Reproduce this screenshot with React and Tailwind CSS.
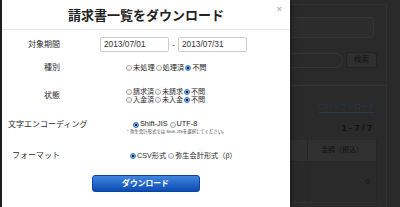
import React from "react";

const FONT = { fontFamily: '"Liberation Sans", "Noto Sans CJK JP", sans-serif' };

function Radio({ checked }) {
  return checked ? (
    <span className="block w-[6px] h-[6px] rounded-full shrink-0 border border-[#3a73c2] bg-[radial-gradient(circle,#15233a_0,#15233a_1px,#86bbf2_1.6px,#4a8ad8_100%)]" />
  ) : (
    <span className="block w-[6px] h-[6px] rounded-full shrink-0 border border-[#a8a8a8] bg-gradient-to-b from-white to-[#e4e4e4]" />
  );
}

function Opt({ checked, children }) {
  return (
    <span className="flex items-center gap-[1px]">
      <Radio checked={checked} />
      <span className="whitespace-nowrap">{children}</span>
    </span>
  );
}

function Label({ children }) {
  return (
    <div className="w-[52px] ml-[6px] shrink-0 text-right whitespace-nowrap text-[8px] text-[#2a2a2a]">
      {children}
    </div>
  );
}

export default function App() {
  return (
    <div className="w-[400px] h-[207px] overflow-hidden flex bg-[#2a2a2a]" style={FONT}>
      <div className="w-[2px] shrink-0 bg-[#262626]" />

      {/* Modal */}
      <div className="w-[288px] shrink-0 h-full bg-white relative z-10 shadow-[0_0_6px_rgba(0,0,0,0.6)] flex flex-col">
        <div className="h-[30px] border-b border-[#e8e8e8] flex items-center justify-center pt-[3px] relative">
          <span className="text-[13px] font-bold text-[#222]">請求書一覧をダウンロード</span>
          <span className="absolute right-[8px] top-[5px] text-[9px] font-bold text-[#bbb] leading-[9px]">×</span>
        </div>

        {/* 対象期間 */}
        <div className="mt-[7px] h-[15px] flex items-center">
          <Label>対象期間</Label>
          <div className="ml-[40px] flex items-center">
            <div className="w-[69px] h-[15px] border border-[#ccc] rounded-[2px] pl-[3px] flex items-center text-[8.3px] text-[#333]">2013/07/01</div>
            <div className="w-[9px] text-center text-[8px] text-[#333]">-</div>
            <div className="w-[69px] h-[15px] border border-[#ccc] rounded-[2px] pl-[3px] flex items-center text-[8.3px] text-[#333]">2013/07/31</div>
          </div>
        </div>

        {/* 種別 */}
        <div className="mt-[11px] h-[10px] flex items-center">
          <Label>種別</Label>
          <div className="ml-[66px] flex items-center gap-[1px] text-[7.2px] text-[#1e1e1e]">
            <Opt>未処理</Opt>
            <Opt>処理済</Opt>
            <Opt checked>不問</Opt>
          </div>
        </div>

        {/* 状態 */}
        <div className="mt-[15px] h-[16px] flex items-center">
          <Label>状態</Label>
          <div className="ml-[66px] flex flex-col text-[7px] leading-[8px] text-[#1e1e1e]">
            <div className="h-[8px] flex items-center gap-[1px]">
              <Opt>請求済</Opt>
              <Opt>未請求</Opt>
              <Opt checked>不問</Opt>
            </div>
            <div className="h-[8px] flex items-center gap-[1px]">
              <Opt>入金済</Opt>
              <Opt>未入金</Opt>
              <Opt checked>不問</Opt>
            </div>
          </div>
        </div>

        {/* 文字エンコーディング */}
        <div className="mt-[16px] flex items-start">
          <div className="h-[9px] flex items-center">
            <Label>文字エンコーディング</Label>
          </div>
          <div className="ml-[67px] flex flex-col">
            <div className="h-[9px] pl-[6px] flex items-center gap-[2px] text-[7.3px] text-[#1e1e1e]">
              <Opt checked>Shift-JIS</Opt>
              <Opt>UTF-8</Opt>
            </div>
            <div className="h-[5px] leading-[5px] text-[4.4px] text-[#444] whitespace-nowrap">* 弥生会計形式では Shift-JISを選択してください。</div>
          </div>
        </div>

        {/* フォーマット */}
        <div className="mt-[17px] h-[10px] flex items-center">
          <Label>フォーマット</Label>
          <div className="ml-[70px] flex items-center gap-[2px] text-[7.2px] text-[#1e1e1e]">
            <Opt checked>CSV形式</Opt>
            <Opt>弥生会計形式（β）</Opt>
          </div>
        </div>

        <div className="mt-[14px] flex justify-center pr-[1px]">
          <div className="w-[108px] h-[17px] rounded-[3px] border border-[#0b43a0] bg-gradient-to-b from-[#3f86e0] to-[#0a4cb2] flex items-center justify-center text-white text-[7.8px] font-bold">
            ダウンロード
          </div>
        </div>
      </div>

      {/* Background page (behind overlay) */}
      <div className="flex-1 flex">
        <div className="w-[97px] shrink-0 mt-[4px] h-[203px] border-t border-r border-[#323232] flex flex-col">
          <div className="mt-[12px] h-[21px] w-[84px] border border-y-[#353535] border-r-[#353535] border-l-0 rounded-r-[3px] bg-[#2c2c2c]" />
          <div className="mt-[14px] h-[16px] flex items-center">
            <div className="w-[53px] h-[15px] border-y border-r border-[#353535] rounded-r-[8px]" />
            <div className="ml-[3px] w-[31px] h-[16px] border border-[#222] rounded-[3px] bg-[#2f2f2f] flex items-center justify-center text-[7.5px] text-[#141414]">検索</div>
          </div>
          <div className="mt-[17px] border-t border-[#353535]" />
          <div className="mt-[16px] flex justify-end pr-[11px]">
            <span className="leading-[9px] pb-[1px] border-b border-[#2a3a4c] text-[7px] text-[#223850] whitespace-nowrap">CSVダウンロード</span>
          </div>
          <div className="mt-[11px] h-[10px] flex items-center justify-end pr-[14px] text-[9px] font-bold text-[#0f0f0f] whitespace-nowrap">1 - 7 / 7</div>
          <div className="mt-[6px] flex w-[87px]">
            <div className="w-[17px] flex flex-col">
              <div className="h-[22px] bg-[#303030] border-b border-[#262626]" />
              <div className="h-[41px] border-b border-[#333]" />
            </div>
            <div className="w-[70px] flex flex-col border-l border-r border-[#262626]">
              <div className="h-[22px] bg-[#303030] border-b border-[#262626] flex items-center justify-center text-[7px] text-[#131313]">金額（税込）</div>
              <div className="h-[41px] border-b border-[#333] flex items-center justify-end pr-[6px] text-[8px] text-[#131313]">0</div>
            </div>
          </div>
        </div>
        <div className="flex-1" />
      </div>
    </div>
  );
}
